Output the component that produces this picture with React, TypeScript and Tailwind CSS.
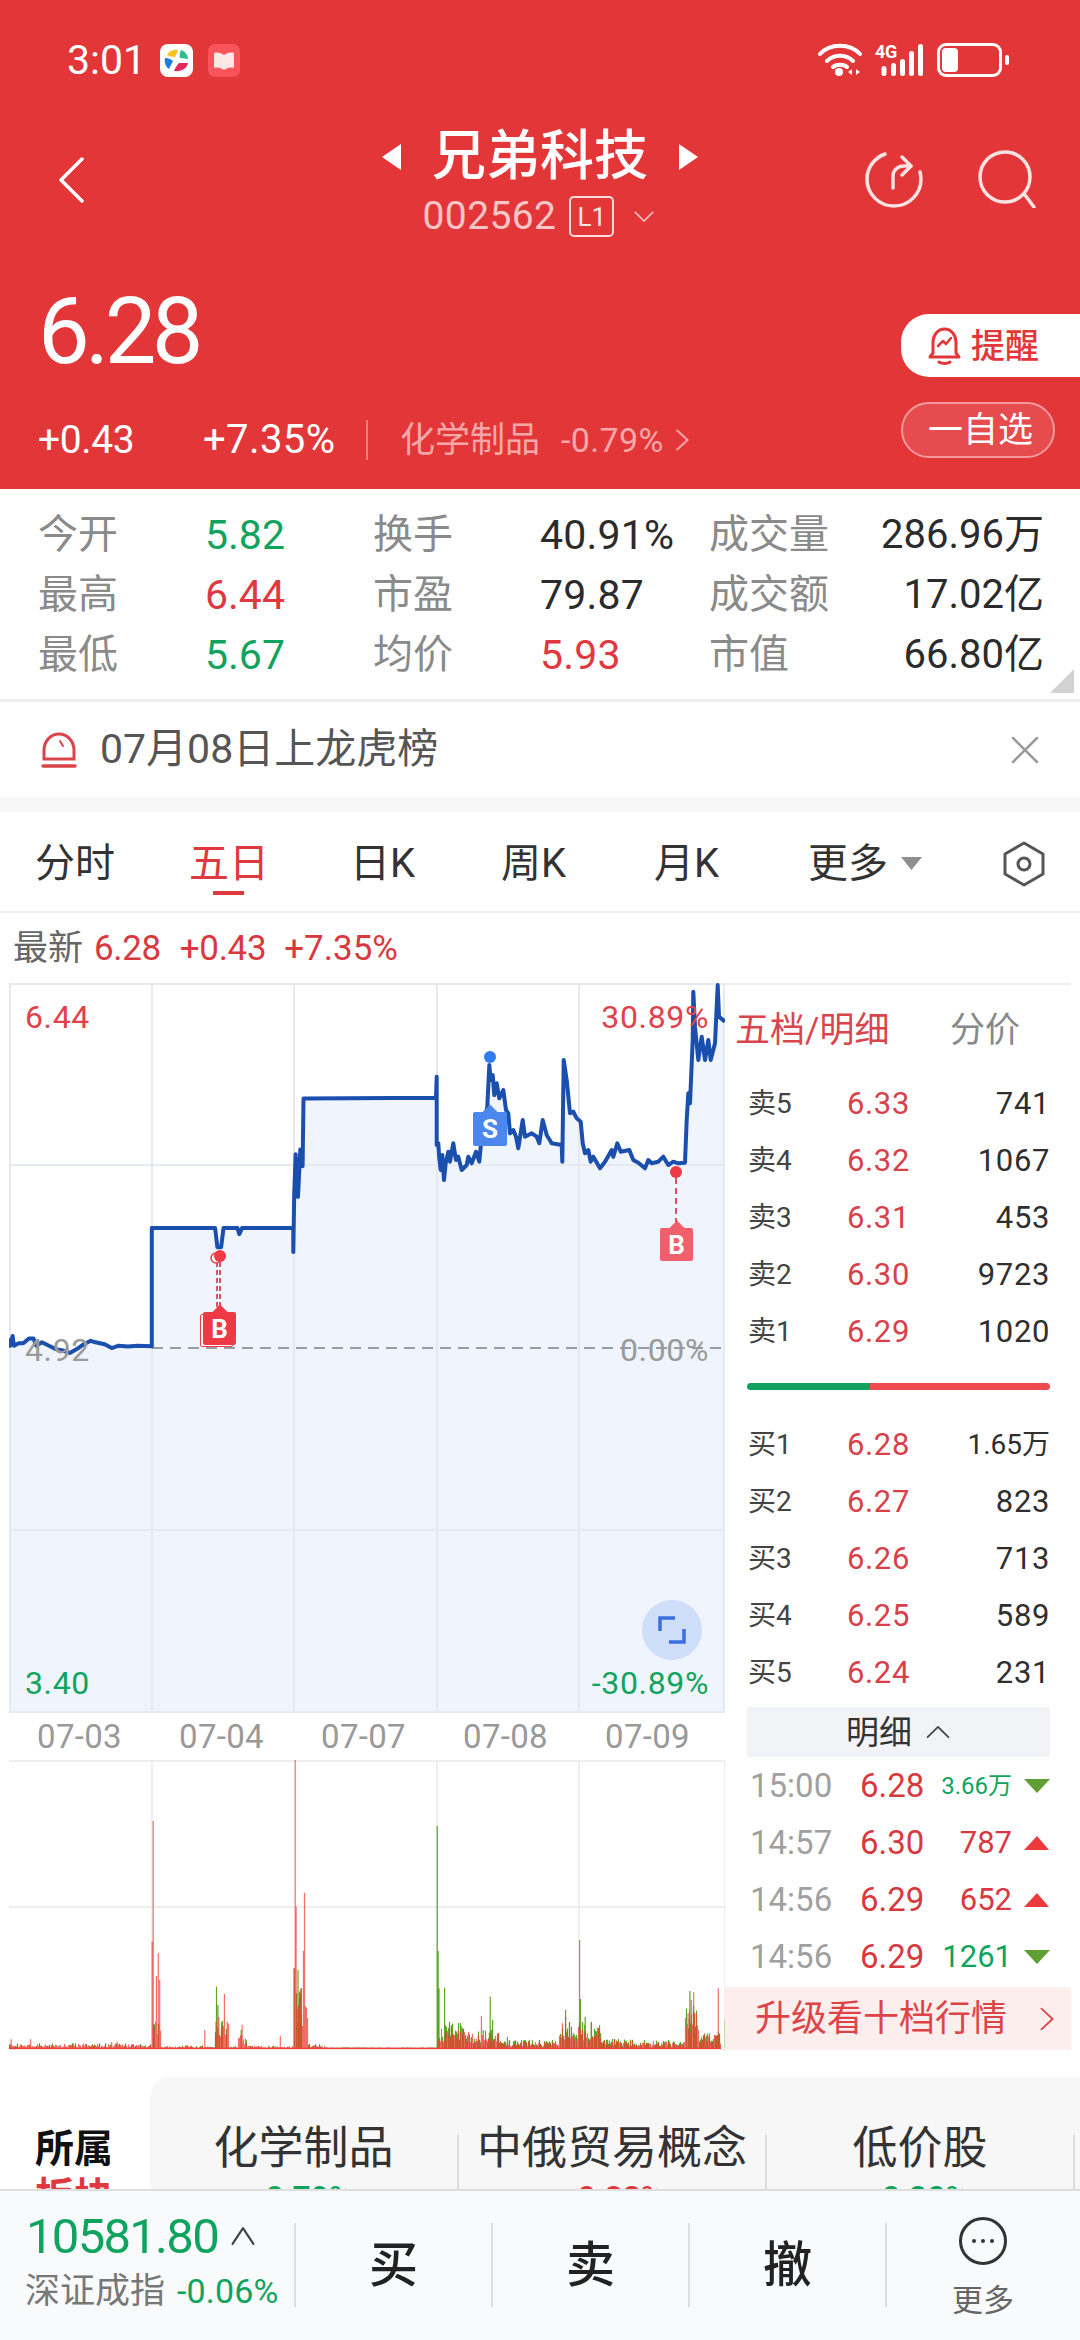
import React from "react";

type P = [number, number];

const day123: P[] = ([[19,760],[22,775],[27,755],[30,775],[40,770],[50,770],[62,760],[72,760],[78,775],[90,768],[105,775],[120,782],[135,785],[150,790],[165,782],[180,772],[195,765],[205,768],[225,772],[240,780],[255,775],[275,777],[295,775],[326,776],[326,532],[462,532],[467,572],[475,572],[480,532],[510,532],[514,545],[520,532],[630,532],[630,582],[632,465],[635,380],[640,468],[645,370],[650,405],[652,265]] as P[]).map(([x, y]) => [x / 2.148, y / 2.063 + 970]);
const day45: P[] = ([[108,353],[110,290],[110,495],[115,490],[118,535],[122,570],[127,525],[132,600],[137,550],[145,515],[150,545],[160,490],[168,540],[175,530],[185,570],[200,555],[205,530],[215,550],[228,515],[238,545],[243,490],[262,380],[268,255],[272,300],[278,285],[283,345],[290,310],[298,355],[310,330],[318,390],[325,400],[330,460],[340,450],[348,470],[355,505],[368,420],[375,470],[395,460],[410,470],[418,490],[428,420],[440,465],[455,490],[485,495],[487,545],[491,240],[500,300],[510,400],[520,395],[530,415],[542,425],[548,490],[555,520],[565,510],[572,545],[580,530],[600,565],[615,545],[635,510],[640,530],[652,490],[662,515],[688,510],[700,540],[715,548],[735,565],[745,540],[755,550],[775,545],[790,530],[805,555],[820,545],[835,550],[855,548],[860,420],[865,340],[870,370],[878,180],[880,35],[885,140],[895,240],[905,170],[915,240],[925,180],[932,240],[945,190],[953,15],[957,110],[975,125]] as P[]).map(([x, y]) => [400 + x / 3, 980 + y / 3]);
const linePts = [...day123, ...day45];
const lineStr = linePts.map(([x, y]) => `${x.toFixed(1)},${y.toFixed(1)}`).join(" ");
const fillStr = `9,1711 ${lineStr} 725,1711`;

const redSp: P[] = [[329,363],[327,725],[336,828],[340,760],[343,840],[440,990],[464,965],[470,950],[482,882],[488,965],[520,975],[516,1010],[602,1008],[634,180],[636,620],[632,805],[640,925],[646,867],[654,578],[652,753],[1034,948],[1245,720],[1215,950],[1208,970],[1478,940],[1490,877],[1543,865],[1485,900],[66,1018],[24,1018],[252,1025],[240,1026]];
const greenSp: P[] = [[465,860],[468,915],[939,378],[941,753],[955,863],[943,865],[1053,890],[1058,960],[1215,930],[1247,897],[1257,950],[1270,965],[1482,873],[1492,980],[1558,957],[518,990],[632,805],[640,810],[646,880],[1038,990],[1090,1010],[1290,1000]];
const bars = () => {
  let seed = 7;
  const rnd = () => { seed = (seed * 1103515245 + 12345) & 0x7fffffff; return seed / 0x7fffffff; };
  let r = "", g = "";
  const base = 2048;
  for (let x = 9; x < 721; x += 1) {
    const u = x * 2.148;
    let h = 0;
    if (u < 326) h = 1 + rnd() * 4;
    else if (u < 345) h = 20 + rnd() * 14;
    else if (u < 440) h = rnd() * 3;
    else if (u < 460) h = rnd() * 2;
    else if (u < 490) h = 8 + rnd() * 26;
    else if (u > 510 && u < 530) h = 6 + rnd() * 14;
    else if (u < 630) h = rnd() * 3;
    else if (u < 660) h = 30 + rnd() * 35;
    else if (u < 700) h = rnd() * 4;
    else if (u < 939) h = 0.4;
    else if (u < 1000) h = 8 + rnd() * 20;
    else if (u < 1070) h = 5 + rnd() * 14;
    else if (u < 1200) h = 2 + rnd() * 7;
    else if (u < 1290) h = 8 + rnd() * 18;
    else if (u < 1470) h = 2 + rnd() * 7;
    else if (u < 1500) h = 18 + rnd() * 26;
    else h = 6 + rnd() * 10;
    const v = `M${x + 0.5} ${base}V${(base - h).toFixed(1)}`;
    r += `M${x + 0.5} ${base}V${(base - h * (0.5 + rnd() * 0.5)).toFixed(1)}`;
    if (rnd() > 0.4 && u > 939) g += v;
    else if (rnd() > 0.7) g += v;
  }
  redSp.forEach(([u, v]) => { r += `M${(u / 2.148).toFixed(1)} ${base}V${(1700 + v / 3).toFixed(1)}`; });
  greenSp.forEach(([u, v]) => { g += `M${(u / 2.148).toFixed(1)} ${base}V${(1700 + v / 3).toFixed(1)}`; });
  return { r, g };
};
const vol = bars();

const Chev = ({ d, className, w = 3 }: { d: string; className?: string; w?: number }) => (
  <svg viewBox="0 0 30 30" fill="none" stroke="currentColor" strokeWidth={w} strokeLinecap="round" strokeLinejoin="round" className={className}><path d={d} /></svg>
);

const Marker = ({ letter, color, className }: { letter: string; color: string; className: string }) => (
  <div className={`absolute flex items-center justify-center text-white font-bold text-[26px] leading-none rounded-[2px] ${className}`} style={{ background: color }}>
    <div className="absolute -top-[5px] left-1/2 -ml-[6px] w-[12px] h-[12px] rotate-45" style={{ background: color }} />
    <span className="relative">{letter}</span>
  </div>
);

const stats = [
  ["今开", "5.82", "text-[#0fa45e]", "换手", "40.91%", "text-[#2b2b2b]", "成交量", "286.96万"],
  ["最高", "6.44", "text-[#e0383f]", "市盈", "79.87", "text-[#2b2b2b]", "成交额", "17.02亿"],
  ["最低", "5.67", "text-[#0fa45e]", "均价", "5.93", "text-[#e0383f]", "市值", "66.80亿"],
];
const sells = [["卖5", "6.33", "741"], ["卖4", "6.32", "1067"], ["卖3", "6.31", "453"], ["卖2", "6.30", "9723"], ["卖1", "6.29", "1020"]];
const buys = [["买1", "6.28", "1.65万"], ["买2", "6.27", "823"], ["买3", "6.26", "713"], ["买4", "6.25", "589"], ["买5", "6.24", "231"]];
const details = [
  ["15:00", "6.28", "3.66万", "d"],
  ["14:57", "6.30", "787", "u"],
  ["14:56", "6.29", "652", "u"],
  ["14:56", "6.29", "1261", "d"],
];

const Quote = ({ r }: { r: string[] }) => (
  <div className="flex items-center h-[57px] pl-[23px] pr-[21px] leading-none">
    <span className="w-[99px] text-[28px] text-[#444]">{r[0]}</span>
    <span className="text-[31px] text-[#d8414a] tracking-[0.02em]">{r[1]}</span>
    <span className={`flex-1 text-right ${r[2].length > 4 ? "text-[28px] tracking-normal" : "text-[31px] tracking-[0.02em]"} text-[#2f2f2f]`}>{r[2]}</span>
  </div>
);

export default function App() {
  return (
    <div className="relative w-[1080px] h-[2340px] overflow-hidden bg-white font-['Roboto','Noto_Sans_CJK_SC',sans-serif]">
      {/* header */}
      <header className="h-[489px] bg-[#e33639] text-white flex flex-col">
        <div className="flex items-center h-[36px] mt-[42px] pl-[67px] pr-[71px]">
          <span className="text-[41px] leading-none w-[93px]">3:01</span>
          <svg viewBox="0 0 33 33" className="w-[33px] h-[33px]">
            <rect width="33" height="33" rx="8" fill="#fff" />
            <path d="M7 11c2-4 7-6 11-5l-3 7c-3 0-6-1-8-2z" fill="#f6c21c" />
            <path d="M21 6c4 1 7 5 7 9l-8-1c-1-2 0-6 1-8z" fill="#2fbf8f" />
            <path d="M5 14c3 0 6 1 8 3l-4 8c-3-2-5-6-4-11z" fill="#1c7ee0" />
            <path d="M19 19l9 0c-1 5-6 9-14 8 1-3 3-6 5-8z" fill="#e3285c" />
          </svg>
          <svg viewBox="0 0 32 33" className="w-[32px] h-[33px] ml-[15px]">
            <rect width="32" height="33" rx="7" fill="#f8545a" />
            <path d="M6 9c4-1 7 0 10 2 3-2 6-3 10-2v15c-4-1-7 0-10 2-3-2-6-3-10-2z" fill="#fde6e6" />
          </svg>
          <div className="flex-1" />
          <svg viewBox="0 0 44 34" className="w-[44px] h-[34px]" fill="none" stroke="#fff" strokeWidth="4" strokeLinecap="round">
            <path d="M2 11C12 0 32 0 42 11" />
            <path d="M9 18c7-7 19-7 26 0" />
            <path d="M15 24c3-3 11-3 14 0" />
            <circle cx="21" cy="29" r="4" fill="#fff" stroke="none" />
            <path d="M34 26l-4 3 4 3zM38 26l4 3-4 3z" fill="#fff" stroke="none" />
          </svg>
          <div className="relative w-[48px] h-[33px] ml-[13px]">
            <span className="absolute left-0 -top-[1px] text-[18px] font-bold leading-none tracking-[-0.02em]">4G</span>
            <svg viewBox="0 0 48 33" className="absolute inset-0 w-[48px] h-[33px]" fill="#fff">
              <rect x="6.500" y="22" width="5" height="10" rx="2.500" />
              <rect x="16" y="19" width="5" height="13" rx="2.500" />
              <rect x="25" y="15" width="5" height="17" rx="2.500" />
              <rect x="34" y="7" width="5" height="25" rx="2.500" />
              <rect x="43" y="0" width="5" height="32" rx="2.500" />
            </svg>
          </div>
          <div className="flex items-center ml-[14px]">
            <div className="w-[65px] h-[34px] rounded-[9px] border-[3px] border-white p-[2px]">
              <div className="w-[16px] h-full rounded-[4px] bg-white" />
            </div>
            <div className="w-[4px] h-[10px] rounded-full bg-white ml-[3px]" />
          </div>
        </div>

        <div className="grid grid-cols-[1fr_auto_1fr] items-start h-[106px] mt-[50px]">
          <div className="pl-[58px] pt-[29px]">
            <svg viewBox="0 0 26 46" className="w-[26px] h-[46px]" fill="none" stroke="#fff" strokeWidth="3.5" strokeLinecap="round" strokeLinejoin="round"><path d="M24 2L3 23l21 21" /></svg>
          </div>
          <div className="flex flex-col items-center pt-[3px]">
            <div className="flex items-center h-[52px]">
              <svg viewBox="0 0 19 26" className="w-[19px] h-[26px] mr-[31px]" fill="#fff"><path d="M19 0v26L0 13z" /></svg>
              <span className="text-[54px] leading-none font-medium">兄弟科技</span>
              <svg viewBox="0 0 19 26" className="w-[19px] h-[26px] ml-[31px]" fill="#fff"><path d="M0 0v26l19-13z" /></svg>
            </div>
            <div className="flex items-center h-[41px] mt-[13px] mr-[1px]">
              <span className="text-[39px] leading-none text-[#f8c6c6] tracking-[0.01em]">002562</span>
              <span className="flex items-center justify-center w-[45px] h-[41px] ml-[13px] rounded-[5px] border-2 border-[#f9dcdc] text-[26px] leading-none text-[#fbe6e6]">L1</span>
              <Chev d="M4 9l11 11L26 9" w={2} className="w-[24px] h-[24px] ml-[18px] text-[#f8c6c6]" />
            </div>
          </div>
          <div className="flex justify-end gap-[55px] pr-[44px] pt-[22px]">
            <svg viewBox="0 0 58 58" className="w-[58px] h-[58px]" fill="none" stroke="#fbe3e3" strokeWidth="3.5" strokeLinecap="round" strokeLinejoin="round">
              <path d="M20 4C9 8 2 18 2 29c0 15 12 27 27 27s27-12 27-27c0-3-.5-5-1-7" />
              <path d="M28 38V26c0-6 5-10 11-10h7" />
              <path d="M37 7l9 9-9 9" />
            </svg>
            <svg viewBox="0 0 58 58" className="w-[58px] h-[58px]" fill="none" stroke="#fbe3e3" strokeWidth="3.5" strokeLinecap="round">
              <circle cx="27" cy="27" r="25" />
              <path d="M47 45l9 12" />
            </svg>
          </div>
        </div>

        <div className="flex justify-between mt-[56px]">
          <div className="pl-[38px] flex flex-col">
            <div className="h-[80px] text-[92px] leading-[84px] tracking-[-0.05em]">6.28</div>
            <div className="flex items-center h-[48px] mt-[46px]">
              <span className="w-[165px] text-[39px] leading-none tracking-[-0.01em]">+0.43</span>
              <span className="w-[163px] text-[40px] leading-none tracking-[0.01em]">+7.35%</span>
              <span className="w-[2px] h-[40px] bg-[#ee7d7f]" />
              <span className="ml-[32px] text-[35px] leading-none text-[#f6a8a8]">化学制品</span>
              <span className="ml-[21px] text-[34px] leading-none text-[#f6a8a8] tracking-[0.01em]">-0.79%</span>
              <Chev d="M9 3l13 12L9 27" w={2.5} className="w-[24px] h-[28px] ml-[6px] text-[#f6a8a8]" />
            </div>
          </div>
          <div className="flex flex-col items-end">
            <div className="w-[179px] h-[63px] mt-[24px] bg-white rounded-l-[28px] flex items-center pl-[27px] text-[#e33639]">
              <svg viewBox="0 0 33 40" className="w-[33px] h-[40px]" fill="none" stroke="#e33639" strokeWidth="3" strokeLinecap="round" strokeLinejoin="round">
                <path d="M5 27V16C5 9 10 3 16.5 3S28 9 28 16v11l3 4H2z" />
                <path d="M11 36c3 2 8 2 11 0" />
                <path d="M10 20l5-5 3 3 5-6" strokeWidth="2.5" />
              </svg>
              <span className="ml-[10px] text-[34px] leading-none font-medium">提醒</span>
            </div>
            <div className="w-[154px] h-[56px] mr-[25px] mt-[25px] pl-[5px] rounded-[28px] border-2 border-[#f29a9b] bg-[#e64b4e] flex items-center justify-center text-[35px] leading-none">一自选</div>
          </div>
        </div>
      </header>

      {/* stats */}
      <section className="relative h-[213px] pt-[16px] pl-[38px] pr-[36px] border-b-[3px] border-[#eeeeee]">
        {stats.map((r) => (
          <div key={r[0]} className="grid grid-cols-[167px_168px_167px_169px_1fr] items-center h-[60px] text-[40px] leading-none">
            <span className="text-[#8a8a8a]">{r[0]}</span>
            <span className={`${r[2]} text-[41px]`}>{r[1]}</span>
            <span className="text-[#8a8a8a]">{r[3]}</span>
            <span className={`${r[5]} text-[41px] tracking-[0.005em]`}>{r[4]}</span>
            <div className="flex justify-between">
              <span className="text-[#8a8a8a]">{r[6]}</span>
              <span className="text-[#2b2b2b] text-[40px]">{r[7]}</span>
            </div>
          </div>
        ))}
        <svg viewBox="0 0 24 24" className="absolute right-[6px] bottom-[6px] w-[24px] h-[24px]"><path d="M24 0v24H0z" fill="#d2d2d2" /></svg>
      </section>

      {/* banner */}
      <section className="h-[95px] flex items-center pl-[41px] pr-[41px] text-[#555]">
        <svg viewBox="0 0 36 36" className="w-[36px] h-[36px]" fill="none" stroke="#d9444a" strokeWidth="3" strokeLinecap="round">
          <path d="M3 27V18C3 9 10 2 18 2s15 7 15 16v9z" />
          <path d="M2 34h32" strokeWidth="3.5" />
          <path d="M19 9l3 5" strokeWidth="2" />
        </svg>
        <span className="ml-[23px] text-[41px] leading-none">07月08日上龙虎榜</span>
        <div className="flex-1" />
        <svg viewBox="0 0 28 28" className="w-[28px] h-[28px]" fill="none" stroke="#9a9a9a" strokeWidth="2.5" strokeLinecap="round"><path d="M2 2l24 24M26 2L2 26" /></svg>
      </section>
      <div className="h-[15px] bg-[#f7f7f7]" />

      {/* tabs */}
      <nav className="h-[101px] flex items-center pl-[35px] pr-[34px] border-b-2 border-[#eeeeee] text-[40px] leading-none text-[#333]">
        <span className="w-[154px] pt-[4px]">分时</span>
        <span className="relative w-[161px] pt-[4px] text-[#e0383f]">五日
          <span className="absolute left-[24px] top-[51px] w-[31px] h-[4px] bg-[#e0383f]" />
        </span>
        <span className="w-[151px] pt-[4px]">日K</span>
        <span className="w-[153px] pt-[4px]">周K</span>
        <span className="w-[154px] pt-[4px]">月K</span>
        <span className="pt-[4px]">更多</span>
        <svg viewBox="0 0 21 13" className="w-[21px] h-[13px] ml-[13px] mt-[4px]"><path d="M0 0h21L10.500 13z" fill="#8f8f8f" /></svg>
        <div className="flex-1" />
        <svg viewBox="0 0 44 46" className="w-[44px] h-[46px] mt-[4px]" fill="none" stroke="#555" strokeWidth="3" strokeLinejoin="round">
          <path d="M22 2l19 11v20L22 44 3 33V13z" />
          <circle cx="22" cy="23" r="6" />
        </svg>
      </nav>

      {/* latest */}
      <div className="h-[70px] flex items-center pl-[13px] text-[35px] leading-none text-[#d9383f]">
        <span className="text-[35px] text-[#666]">最新</span>
        <span className="ml-[11px] tracking-[-0.01em]">6.28</span>
        <span className="ml-[19px] tracking-[-0.01em]">+0.43</span>
        <span className="ml-[18px]">+7.35%</span>
      </div>

      {/* chart + order book */}
      <section className="flex pl-[9px]">
        <div className="w-[716px]">
          <div className="relative h-[730px] leading-none">
            <svg viewBox="9 983 716 730" className="absolute inset-0 w-[716px] h-[730px]">
              <polygon points={fillStr} fill="#eff4fd" />
              <g stroke="#e6e9f0" strokeWidth="2">
                <path d="M9 984H725M9 1165H725M9 1530H725M9 1712H725M10 984V1712M152 984V1712M294 984V1712M437 984V1712M579 984V1712M724 984V1712" fill="none" />
              </g>
              <path d="M152 1348H725" stroke="#9b9ba6" strokeWidth="2" strokeDasharray="11 7" fill="none" />
              <polyline points={lineStr} fill="none" stroke="#1b4fae" strokeWidth="4" strokeLinejoin="round" />
              <path d="M217 1262V1310" stroke="#e0506a" strokeWidth="2" strokeDasharray="5 3" />
              <path d="M220 1262V1310" stroke="#e0506a" strokeWidth="2" strokeDasharray="5 3" />
              <path d="M676 1178V1226" stroke="#e0506a" strokeWidth="2" strokeDasharray="6 4" />
              <circle cx="216" cy="1258" r="5" fill="#fff" stroke="#ee3a45" strokeWidth="1.500" />
              <circle cx="220" cy="1256" r="6" fill="#ee3a45" />
              <circle cx="490" cy="1057" r="6" fill="#2f7bf0" />
              <circle cx="676" cy="1172" r="6" fill="#ee3a45" />
            </svg>
            <span className="absolute left-[16px] top-[18px] text-[32px] text-[#e0424a] tracking-[0.02em]">6.44</span>
            <span className="absolute right-[16px] top-[18px] text-[32px] text-[#e0424a] tracking-[0.02em]">30.89%</span>
            <span className="absolute left-[16px] top-[351px] text-[32px] text-[#9a9a9a] tracking-[0.02em]">4.92</span>
            <span className="absolute right-[16px] top-[351px] text-[32px] text-[#9a9a9a] tracking-[0.02em]">0.00%</span>
            <span className="absolute left-[16px] top-[684px] text-[32px] text-[#0fa45e] tracking-[0.02em]">3.40</span>
            <span className="absolute right-[16px] top-[684px] text-[32px] text-[#0fa45e] tracking-[0.02em]">-30.89%</span>
            <Marker letter="S" color="#4b87ec" className="left-[464px] top-[129px] w-[34px] h-[34px]" />
            <Marker letter="B" color="#f0606c" className="left-[651px] top-[245px] w-[33px] h-[33px]" />
            <div className="absolute left-[191px] top-[331px] w-[33px] h-[33px] rounded-[2px] border border-[#ee3a45] bg-white" />
            <Marker letter="B" color="#ee3a45" className="left-[194px] top-[329px] w-[33px] h-[33px]" />
            <div className="absolute left-[633px] top-[617px] w-[60px] h-[60px] rounded-full bg-[#cfdffa] flex items-center justify-center">
              <svg viewBox="0 0 28 28" className="w-[28px] h-[28px]" fill="none" stroke="#3b6fe0" strokeWidth="3.5"><path d="M2 15V2h15M26 13v13H11" /></svg>
            </div>
          </div>
          <div className="h-[47px] flex items-center text-[33px] leading-none text-[#999] tracking-[0.01em]">
            {["07-03", "07-04", "07-07", "07-08", "07-09"].map((d) => (
              <span key={d} className="w-[142px] pl-[28px] shrink-0">{d}</span>
            ))}
          </div>
          <svg viewBox="9 1760 716 290" className="block w-[716px] h-[290px]">
            <path d="M9 1761H725M9 1907H725M152 1760V2048M437 1760V2048M579 1760V2048M725 1760V2048" stroke="#eeeeee" strokeWidth="2" fill="none" />
            <path d="M9 2048.500H721" stroke="#ef3b36" strokeWidth="1.500" />
            <path d="M9 2050H725" stroke="#f5e3e0" strokeWidth="2" />
            <path d={vol.g} stroke="#5aa626" strokeWidth="1.200" fill="none" />
            <path d={vol.r} stroke="#ef3b36" strokeWidth="1.200" fill="none" opacity="0.75" />
          </svg>
        </div>

        <aside className="w-[346px] border-t-2 border-[#eeeeee] self-start">
          <div className="h-[90px] flex items-center pl-[10px] text-[35px] leading-none">
            <span className="w-[215px] text-[#d9454c]">五档/明细</span>
            <span className="text-[#888]">分价</span>
          </div>
          {sells.map((r) => <Quote key={r[0]} r={r} />)}
          <div className="flex h-[7px] mt-[23px] ml-[22px] mr-[21px]">
            <div className="w-[123px] h-full bg-[#0ea25c] rounded-l-full" />
            <div className="flex-1 h-full bg-[#ef4a4e] rounded-r-full" />
          </div>
          <div className="h-[26px]" />
          {buys.map((r) => <Quote key={r[0]} r={r} />)}
          <div className="flex items-center justify-center h-[50px] mt-[6px] ml-[22px] mr-[21px] bg-[#f1f3f7] text-[33px] leading-none text-[#333]">
            <span>明细</span>
            <Chev d="M3 21L15 9l12 12" w={2} className="w-[26px] h-[26px] ml-[13px] text-[#444]" />
          </div>
          {details.map((r, i) => (
            <div key={i} className="flex items-center h-[57px] pl-[25px] pr-[21px] leading-none">
              <span className="w-[110px] text-[33px] text-[#a0a0a0]">{r[0]}</span>
              <span className="text-[33px] text-[#d9383f]">{r[1]}</span>
              <span className={`flex-1 text-right ${r[2].length > 4 ? "text-[24px]" : "text-[31px]"} ${r[3] === "d" ? "text-[#0fa45e]" : "text-[#d9383f]"}`}>{r[2]}</span>
              <svg viewBox="0 0 26 14" className="w-[26px] h-[14px] ml-[12px]">
                {r[3] === "d" ? <path d="M0 0h26L13 14z" fill="#5f9e33" /> : <path d="M13 0l12 14H0z" fill="#ee3a3a" />}
              </svg>
            </div>
          ))}
          <div className="h-[63px] mt-[2px] bg-[#fdeeee] flex items-center pl-[30px] text-[#dd4448]">
            <span className="text-[36px] leading-none">升级看十档行情</span>
            <Chev d="M8 2l14 13L8 28" w={2.2} className="w-[24px] h-[24px] ml-[28px]" />
          </div>
        </aside>
      </section>

      {/* concept row */}
      <section className="flex h-[263px] mt-[27px]">
        <div className="w-[150px] pl-[35px] pt-[48px] text-[39px] leading-[48px] font-bold">
          <div className="text-[#111]">所属</div>
          <div className="text-[#e0383f]">板块</div>
        </div>
        <div className="flex-1 flex bg-[#f7f7f8] rounded-tl-[20px]">
          {[["化学制品", "-0.79%", "text-[#0fa45e]"], ["中俄贸易概念", "+0.82%", "text-[#e0383f]"], ["低价股", "-0.30%", "text-[#0fa45e]"]].map((c) => (
            <div key={c[0]} className="flex w-[308px] first:w-[309px]">
              <div className="flex-1 flex flex-col items-center pt-[49px] leading-none">
                <span className="text-[45px] text-[#333]">{c[0]}</span>
                <span className={`mt-[10px] text-[32px] font-medium ${c[2]}`}>{c[1]}</span>
              </div>
              <div className="w-[2px] h-[60px] mt-[58px] bg-[#dcdcdc]" />
            </div>
          ))}
        </div>
      </section>

      {/* bottom bar */}
      <footer className="absolute left-0 bottom-0 w-[1080px] h-[151px] bg-[#f9fafb] border-t-2 border-[#dedede] flex items-start">
        <div className="w-[294px] pl-[25px] pt-[27px] shrink-0 leading-none">
          <div className="flex items-center h-[36px]">
            <span className="text-[49px] text-[#0fa45e] tracking-[-0.035em] pl-[1px]">10581.80</span>
            <Chev d="M3 24L15 6l12 18" w={2.5} className="w-[26px] h-[26px] ml-[12px] text-[#444]" />
          </div>
          <div className="flex items-center h-[32px] mt-[21px]">
            <span className="text-[35px] text-[#777]">深证成指</span>
            <span className="ml-[12px] text-[34px] text-[#0fa45e] tracking-[0.005em]">-0.06%</span>
          </div>
        </div>
        {["买", "卖", "撤"].map((t) => (
          <div key={t} className="flex items-center w-[197px] h-[84px] mt-[32px] border-l-2 border-[#dedede] justify-center text-[49px] leading-none font-medium text-[#222] shrink-0">
            <span>{t}</span>
          </div>
        ))}
        <div className="flex mt-[32px] h-[84px] border-l-2 border-[#dedede] w-[194px]" />
      </footer>
      <div className="absolute left-[952px] top-[2217px] w-[62px] flex flex-col items-center">
        <svg viewBox="0 0 48 48" className="w-[48px] h-[48px]" fill="none" stroke="#333" strokeWidth="3">
          <circle cx="24" cy="24" r="22.500" />
          <circle cx="15" cy="24" r="2" fill="#333" stroke="none" />
          <circle cx="24" cy="24" r="2" fill="#333" stroke="none" />
          <circle cx="33" cy="24" r="2" fill="#333" stroke="none" />
        </svg>
        <span className="mt-[20px] text-[31px] leading-none text-[#666]">更多</span>
      </div>
    </div>
  );
}
